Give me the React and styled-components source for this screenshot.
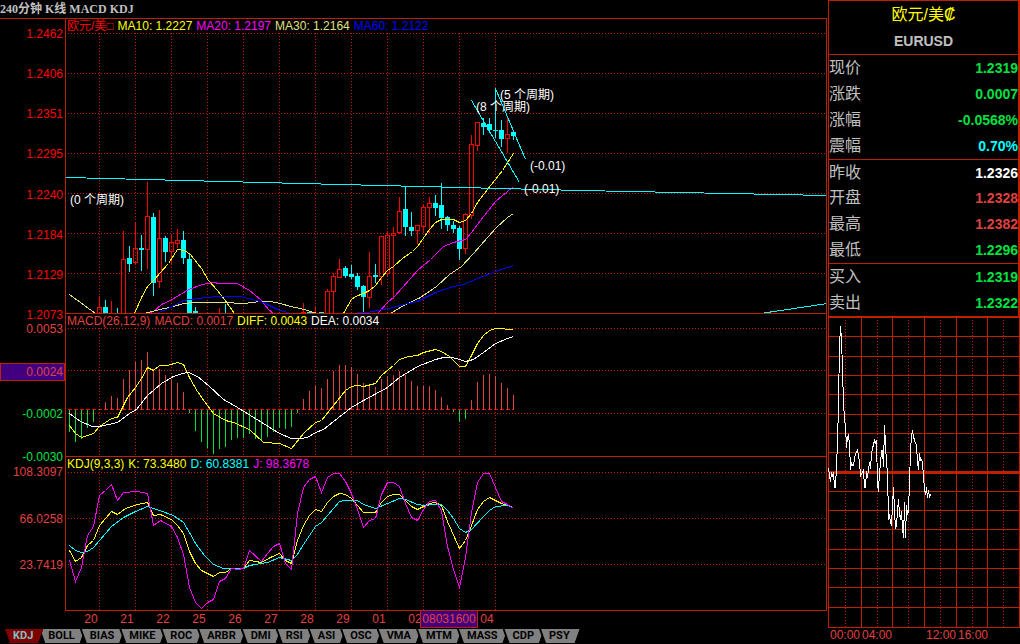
import React, { useState } from 'react';
import styled, { createGlobalStyle } from 'styled-components';

const GlobalStyle = createGlobalStyle`
  * {
    box-sizing: border-box;
  }

  body {
    margin: 0;
    background: #000;
    color: #c0c0c0;
    font-family: "Liberation Sans", "Noto Sans CJK SC", sans-serif;
    font-size: 12px;
    line-height: 14px;
  }
`;

const LINE = '#c02000';
const RED = '#ff0000';
const SOFT_RED = '#e04040';
const GREEN = '#00e040';
const CYAN = '#00ffff';
const YELLOW = '#ffff00';
const MAGENTA = '#ff00ff';
const KHAKI = '#e0e080';
const BLUE = '#0000ff';

const Page = styled.div`
  display: grid;
  grid-template-columns: 1fr 192px;
  min-height: 100vh;
`;

const Main = styled.main`
  display: flex;
  flex-direction: column;
  min-width: 0;
  padding-right: 1px;
`;

const Title = styled.h1`
  height: 18px;
  margin: 0;
  font-family: "Liberation Serif", "Noto Sans CJK SC", serif;
  font-size: 12px;
  line-height: 18px;
  font-weight: bold;
`;

const Charts = styled.div`
  border-top: 1px solid ${LINE};
`;

const Panel = styled.section`
  display: grid;
  grid-template-columns: 65px 1fr;
  grid-template-rows: 100%;
  height: ${(p) => p.$height}px;
`;

const Axis = styled.div`
  display: flex;
  flex-direction: column;
  justify-content: space-between;
  padding-top: 8px;
  margin-bottom: ${(p) => p.$bottom}px;
  text-align: right;
`;

const AxisLabel = styled.span`
  padding-right: 2px;
  color: ${(p) => p.$color};
`;

const AxisCursor = styled(AxisLabel)`
  margin: -2px 0;
  padding-right: 1px;
  border: 1px solid ${LINE};
  background: #400080;
  line-height: 16px;
`;

const Plot = styled.div`
  position: relative;
  display: flex;
  flex-direction: column;
  min-width: 0;
  min-height: 0;
  border: 1px solid ${LINE};
  border-top: none;
`;

const Legend = styled.div`
  display: flex;
  gap: 4px;
  padding-left: 1px;
  white-space: nowrap;
`;

const LegendItem = styled.span`
  color: ${(p) => p.$color};
`;

const Canvas = styled.svg`
  display: block;
  flex: 1;
  width: 100%;
  height: 0;
  min-height: 0;
  overflow: hidden;
  fill: none;
  shape-rendering: crispEdges;
`;

const Note = styled.span`
  position: absolute;
  left: ${(p) => p.$x}px;
  top: ${(p) => p.$y}px;
  color: #fff;
  white-space: nowrap;
`;

const Dates = styled.div`
  position: relative;
  display: flex;
  height: 18px;
  padding-left: 73px;
  color: ${SOFT_RED};
  line-height: 16px;
`;

const DateCell = styled.span`
  width: 36px;
  text-align: center;
`;

const DateCursor = styled.span`
  position: absolute;
  left: 420px;
  top: -1px;
  width: 58px;
  border: 1px solid ${LINE};
  background: #400080;
  text-align: center;
`;

const Tabs = styled.nav`
  display: flex;
  padding-left: 3px;
`;

const Tab = styled.button`
  position: relative;
  z-index: ${(p) => (p.$active ? 1 : 0)};
  height: 14px;
  margin: 0 -5px 0 0;
  padding: 0 10px;
  border: none;
  background: #000;
  color: ${(p) => (p.$active ? '#80c0c0' : '#000')};
  font: bold 11px/14px Roboto, sans-serif;
  clip-path: polygon(0 0, 100% 0, calc(100% - 5px) 100%, 5px 100%);

  &::before {
    content: "";
    position: absolute;
    inset: 0;
    z-index: -1;
    background: ${(p) => (p.$active ? '#800000' : '#808080')};
    clip-path: polygon(2px 0, 100% 0, calc(100% - 5px) 100%, 7px 100%);
  }
`;

const Side = styled.aside`
  display: flex;
  flex-direction: column;
`;

const Quotes = styled.div`
  display: flex;
  flex-direction: column;
  height: 316px;
  border: 1px solid ${LINE};
  border-right-width: 2px;
  border-bottom: none;
`;

const Symbol = styled.header`
  display: flex;
  flex-direction: column;
  align-items: center;
  gap: 4px;
  height: 54px;
  padding-top: 2px;
  border-bottom: 1px solid ${LINE};
`;

const SymbolName = styled.span`
  color: ${YELLOW};
  font-size: 16px;
  line-height: 24px;
`;

const SymbolCode = styled.span`
  font-size: 14px;
  line-height: 20px;
  font-weight: bold;
`;

const QuoteGroup = styled.dl`
  display: flex;
  flex-direction: column;
  flex: ${(p) => p.$rows};
  margin: 0;

  & + & {
    border-top: 1px solid ${LINE};
  }
`;

const Quote = styled.div`
  display: flex;
  flex: 1;
  align-items: center;
  justify-content: space-between;
`;

const QuoteLabel = styled.dt`
  font-size: 16px;
  line-height: 24px;
`;

const QuoteValue = styled.dd`
  margin: 0;
  color: ${(p) => p.$color};
  font-size: 14px;
  line-height: 24px;
  font-weight: bold;
`;

const Intraday = styled.div`
  display: flex;
  flex-direction: column;
  height: 312px;
  border-top: 2px solid ${LINE};
`;

const Times = styled.div`
  display: grid;
  grid-template-columns: repeat(6, 32px);
  padding-left: 2px;
  color: ${SOFT_RED};
`;

// [index, high, top, bottom, low, rising]
const candles = [
  [5, 296, 307, 316, 316, 1], [6, 300, 307, 316, 316, 0], [7, 301, 316, 317, 317, 1],
  [8, 308, 316, 317, 317, 0], [9, 231, 259, 316, 316, 1], [10, 246, 258, 264, 272, 0],
  [11, 222, 248, 262, 264, 1], [12, 235, 248, 250, 271, 0], [13, 182, 216, 249, 269, 1],
  [14, 213, 217, 283, 296, 0], [15, 210, 238, 281, 288, 1], [16, 236, 238, 252, 262, 0],
  [17, 234, 242, 251, 264, 1], [18, 229, 240, 243, 248, 1], [19, 231, 240, 258, 264, 0],
  [20, 254, 259, 314, 314, 0], [21, 307, 311, 314, 314, 0], [25, 308, 316, 317, 317, 1],
  [26, 304, 316, 317, 317, 0], [39, 303, 312, 316, 316, 1], [40, 311, 312, 314, 314, 0],
  [41, 307, 316, 317, 317, 1], [42, 312, 312, 314, 314, 0], [43, 289, 291, 316, 316, 1],
  [44, 273, 276, 291, 316, 1], [45, 259, 269, 277, 277, 1], [46, 266, 268, 276, 278, 0],
  [47, 265, 274, 277, 279, 0], [48, 273, 276, 287, 290, 0], [49, 285, 286, 297, 314, 0],
  [50, 252, 276, 297, 308, 1], [51, 264, 275, 277, 283, 0], [52, 236, 236, 276, 285, 1],
  [53, 231, 235, 273, 276, 1], [54, 227, 233, 235, 299, 1], [55, 197, 211, 232, 234, 1],
  [56, 187, 209, 227, 236, 0], [57, 212, 227, 231, 236, 0], [58, 225, 225, 230, 244, 1],
  [59, 204, 207, 226, 233, 1], [60, 197, 203, 207, 233, 1], [61, 195, 203, 208, 216, 0],
  [62, 183, 205, 218, 229, 0], [63, 216, 217, 225, 231, 0], [64, 221, 225, 229, 233, 0],
  [65, 226, 228, 249, 260, 0], [66, 213, 214, 248, 254, 1], [67, 135, 144, 215, 219, 1],
  [68, 122, 122, 145, 151, 1], [69, 118, 123, 127, 135, 0], [70, 118, 124, 130, 133, 0],
  [71, 88, 130, 131, 138, 0], [72, 120, 130, 139, 147, 0], [73, 118, 134, 138, 153, 1],
  [74, 130, 132, 136, 140, 0],
];

const priceLines = [
  [YELLOW, '134,313 141,297 147,286 154,279 160,272 168,263 177,249 184,250 190,254 201,268 208,280 217,290 224,299 234,313'],
  [YELLOW, '343,313 351,299 355,296 363,293 369,290 375,285 381,277 387,270 393,266 402,258 412,251 417,246 429,229 435,222 441,219 453,219 459,222 465,220 471,213 477,202 487,189 502,170 513,153'],
  [MAGENTA, '147,313 153,311 161,304 170,300 188,289 202,284 213,282 219,283 237,283 249,290 260,299 268,309 273,313'],
  [MAGENTA, '377,313 387,302 393,297 402,287 417,270 430,259 443,246 453,242 465,239 471,232 480,220 495,201 513,186'],
  [KHAKI, '69,294 95,313'],
  [KHAKI, '144,313 155,310 173,306 183,303 195,302 223,302 243,303 260,301 270,301 280,303 290,306 300,308 317,313'],
  [KHAKI, '390,313 403,305 420,297 436,286 449,274 461,266 473,253 495,228 507,217 513,213'],
  [BLUE, '156,313 170,307 183,300 197,298 217,296 240,296 263,302 277,309 290,313'],
  [BLUE, '347,313 367,312 393,307 403,304 417,301 435,292 453,286 463,284 477,278 495,271 513,265'],
  [CYAN, '66,177 340,184 580,190 827,195'],
  [CYAN, '760,313 827,303'],
  [CYAN, '471,100 519,182'],
  [CYAN, '495,88 525,159'],
];

const macdBars = [
  -23, -33, -30, -19, -13, 0, 7, 13, 11, 30, 39, 47, 49, 57, 40, 40, 34, 29, 26, 17,
  -4, -22, -33, -39, -45, -40, -38, -31, -29, -29, -25, -30, -31, -28, -23, -19, -20, -18, -4, 10,
  18, 23, 21, 30, 38, 44, 44, 42, 35, 26, 25, 22, 30, 33, 34, 38, 34, 28, 23, 23,
  23, 19, 12, 4, -3, -13, -10, 9, 27, 34, 35, 33, 26, 21, 14,
];

const macdLines = [
  [YELLOW, '69,425 75,433 81,437 93,433 99,426 111,418 117,417 127,397 135,387 141,378 147,367 153,370 159,365 167,365 177,362 183,364 189,377 197,391 204,401 213,413 225,420 233,422 249,429 263,442 279,443 291,448 303,433 315,422 321,420 333,405 337,400 345,390 351,386 357,385 363,386 375,383 381,375 393,365 399,359 408,356 417,355 423,352 435,349 441,351 449,356 459,366 465,366 471,355 477,343 483,335 489,330 495,328 513,329'],
  ['#fff', '69,413 80,421 92,426 99,426 117,422 129,413 136,409 147,395 161,383 173,376 182,373 188,372 197,376 208,385 223,399 237,407 250,415 279,433 291,438 300,438 307,437 315,432 323,429 333,421 351,407 363,400 387,387 399,377 417,366 435,359 443,357 452,357 459,359 465,361 473,359 483,352 495,343 507,338 513,336'],
];

const kdjLines = [
  [YELLOW, '69,550 75,561 81,557 87,545 93,540 99,525 111,511 117,514 125,508 137,504 147,502 153,515 160,514 171,519 177,525 183,533 189,551 195,563 201,570 213,576 219,572 225,572 231,568 243,568 249,560 261,562 270,557 279,553 285,560 291,563 297,540 303,525 309,515 315,509 321,511 327,502 333,496 339,493 345,494 351,498 357,505 363,512 375,512 381,502 387,496 393,494 399,494 405,500 411,506 417,509 423,506 429,503 435,502 441,505 447,521 459,548 465,540 471,525 477,509 483,501 489,497 501,503 513,507'],
  [CYAN, '69,545 75,550 81,552 87,551 93,547 111,526 123,517 135,511 147,506 159,510 173,515 183,522 189,532 195,543 204,555 213,564 223,568 243,568 249,565 267,562 279,557 291,560 297,554 303,544 315,526 321,522 333,508 339,501 345,500 357,500 363,504 375,508 387,503 399,498 405,499 417,504 423,505 435,504 441,504 447,510 453,518 459,528 465,532 471,529 483,516 489,510 495,506 507,505 513,507'],
  [MAGENTA, '69,560 75,581 81,567 87,535 93,526 99,495 105,490 111,484 117,500 123,492 137,491 147,493 153,525 160,520 171,526 177,537 183,554 189,587 195,602 201,608 207,602 213,599 219,581 225,578 231,568 237,569 243,568 249,550 261,561 267,553 273,546 279,543 285,563 291,569 297,513 303,487 309,479 315,476 321,492 327,477 333,473 339,473 345,481 351,493 357,509 363,527 369,520 375,518 381,494 387,482 393,482 399,486 405,503 411,517 417,520 423,509 429,501 435,500 441,510 447,546 453,569 459,587 465,557 471,512 477,482 483,473 489,473 495,487 501,501 507,504 513,508'],
];

// one price per minute column
const minutes = [
  150, 157, 163, 154, 158, 154, 169, 169, 146, 126, 84, 28, 8, 20, 52, 84, 101, 108, 129, 119,
  116, 126, 151, 144, 147, 147, 141, 135, 134, 132, 136, 144, 157, 155, 154, 151, 169, 169, 153, 159,
  151, 144, 150, 136, 130, 126, 122, 124, 122, 165, 173, 153, 146, 132, 132, 148, 107, 126, 144, 154,
  201, 196, 204, 207, 186, 169, 192, 210, 207, 193, 181, 196, 201, 193, 210, 219, 184, 219, 187, 196,
  192, 164, 133, 116, 113, 118, 122, 125, 126, 144, 151, 135, 142, 141, 144, 159, 170, 176, 169, 179,
  172, 179, 176,
];

// the cell under the date cursor stays empty
const dates = ['20', '21', '22', '25', '26', '27', '28', '29', '01', '02', '', '04'];

const tabs = ['KDJ', 'BOLL', 'BIAS', 'MIKE', 'ROC', 'ARBR', 'DMI', 'RSI', 'ASI', 'OSC', 'VMA', 'MTM', 'MASS', 'CDP', 'PSY'];

const quotes = [
  [['现价', '1.2319', GREEN], ['涨跌', '0.0007', GREEN], ['涨幅', '-0.0568%', GREEN], ['震幅', '0.70%', CYAN]],
  [['昨收', '1.2326', '#fff'], ['开盘', '1.2328', SOFT_RED], ['最高', '1.2382', SOFT_RED], ['最低', '1.2296', GREEN]],
  [['买入', '1.2319', GREEN], ['卖出', '1.2322', GREEN]],
];

const xOf = (i) => 69.5 + i * 6;

const Plotted = ({ top, rows, lines, children }) => (
  <Canvas aria-hidden="true">
    <g transform={`translate(-66 ${-top})`}>
      <g stroke={LINE} strokeDasharray="1 2">
        {dates.map((d, i) => (
          <line key={i} x1={99.5 + i * 36} x2={99.5 + i * 36} y1={top} y2={top + 400} />
        ))}
        {rows.map((y) => (
          <line key={y} x1="68" x2="4000" y1={y + 0.5} y2={y + 0.5} />
        ))}
      </g>
      {children}
      <g transform="translate(.5 .5)">
        {lines.map(([color, points]) => (
          <polyline key={points} stroke={color} points={points} />
        ))}
      </g>
    </g>
  </Canvas>
);

const Candle = ({ data: [i, high, top, bottom, low, rising] }) => {
  const x = xOf(i);
  if (!rising) {
    return (
      <g stroke={CYAN}>
        <line x1={x} x2={x} y1={high} y2={low} />
        <rect x={x - 2.5} y={top} width="5" height={Math.max(bottom - top, 1)} fill={CYAN} stroke="none" />
      </g>
    );
  }
  return (
    <g stroke={RED}>
      <line x1={x} x2={x} y1={high} y2={top} />
      <line x1={x} x2={x} y1={bottom} y2={low} />
      <rect x={x - 2} y={top + 0.5} width="4" height={bottom - top} />
    </g>
  );
};

const PricePanel = () => (
  <Panel $height={295}>
    <Axis $bottom={-8}>
      {['1.2462', '1.2406', '1.2351', '1.2295', '1.2240', '1.2184', '1.2129', '1.2073'].map((v) => (
        <AxisLabel key={v} $color={RED}>{v}</AxisLabel>
      ))}
    </Axis>
    <Plot>
      <Legend>
        <LegendItem $color={RED}>欧元/美□</LegendItem>
        <LegendItem $color={YELLOW}>MA10: 1.2227</LegendItem>
        <LegendItem $color={MAGENTA}>MA20: 1.2197</LegendItem>
        <LegendItem $color={KHAKI}>MA30: 1.2164</LegendItem>
        <LegendItem $color={BLUE}>MA60: 1.2122</LegendItem>
      </Legend>
      <Plotted top={33} rows={[33, 73, 113, 153, 193, 233, 273]} lines={priceLines}>
        {candles.map((c) => <Candle key={c[0]} data={c} />)}
      </Plotted>
      <Note $x={4} $y={174}>(0 个周期)</Note>
      <Note $x={410} $y={81}>(8 个周期)</Note>
      <Note $x={434} $y={69}>(5 个周期)</Note>
      <Note $x={464} $y={140}>(-0.01)</Note>
      <Note $x={458} $y={163}>(-0.01)</Note>
    </Plot>
  </Panel>
);

const MacdPanel = () => (
  <Panel $height={143}>
    <Axis $bottom={-7}>
      <AxisLabel $color={SOFT_RED}>0.0053</AxisLabel>
      <AxisCursor $color={SOFT_RED}>0.0024</AxisCursor>
      <AxisLabel $color={GREEN}>-0.0002</AxisLabel>
      <AxisLabel $color={GREEN}>-0.0030</AxisLabel>
    </Axis>
    <Plot>
      <Legend>
        <LegendItem $color={SOFT_RED}>MACD(26,12,9)</LegendItem>
        <LegendItem $color={SOFT_RED}>MACD: 0.0017</LegendItem>
        <LegendItem $color={YELLOW}>DIFF: 0.0043</LegendItem>
        <LegendItem $color="#fff">DEA: 0.0034</LegendItem>
      </Legend>
      <Plotted top={328} rows={[328, 370, 413]} lines={macdLines}>
        <line x1="68" x2="514" y1="409.5" y2="409.5" stroke={RED} strokeDasharray="4 2" />
        {macdBars.map((v, i) => (
          <line key={i} x1={xOf(i)} x2={xOf(i)} y1="410" y2={409 - v} stroke={v > 0 ? SOFT_RED : GREEN} />
        ))}
      </Plotted>
    </Plot>
  </Panel>
);

const KdjPanel = () => (
  <Panel $height={154}>
    <Axis $bottom={39}>
      {['108.3097', '66.0258', '23.7419'].map((v) => (
        <AxisLabel key={v} $color={SOFT_RED}>{v}</AxisLabel>
      ))}
    </Axis>
    <Plot>
      <Legend>
        <LegendItem $color={YELLOW}>KDJ(9,3,3)</LegendItem>
        <LegendItem $color={YELLOW}>K: 73.3480</LegendItem>
        <LegendItem $color={CYAN}>D: 60.8381</LegendItem>
        <LegendItem $color={MAGENTA}>J: 98.3678</LegendItem>
      </Legend>
      <Plotted top={471} rows={[472, 518, 564]} lines={kdjLines} />
    </Plot>
  </Panel>
);

const IntradayChart = () => (
  <Intraday>
    <Canvas aria-hidden="true">
      <g stroke={LINE}>
        {[18, 38, 57, 76, 96, 115, 134, 173, 192, 211, 231, 250, 269, 289, 309].map((y) => (
          <line key={y} x1="0" x2="192" y1={y + 0.5} y2={y + 0.5} />
        ))}
        <line x1="0" x2="192" y1="154.5" y2="154.5" strokeWidth="3" />
        {[0, 33, 64, 96, 128, 159, 191].map((x) => (
          <line key={x} x1={x + 0.5} x2={x + 0.5} y1="0" y2="310" />
        ))}
        {[17, 49, 80, 112, 144, 175].map((x) => (
          <line key={x} x1={x + 0.5} x2={x + 0.5} y1="2" y2="310" strokeDasharray="1 2" />
        ))}
      </g>
      <polyline stroke="#fff" points={minutes.map((y, i) => `${i + 0.5},${y + 0.5}`).join(' ')} />
    </Canvas>
  </Intraday>
);

const App = () => {
  const [active, setActive] = useState('KDJ');

  return (
    <>
      <GlobalStyle />
      <Page>
        <Main>
          <Title>240分钟 K线 MACD KDJ</Title>
          <Charts>
            <PricePanel />
            <MacdPanel />
            <KdjPanel />
          </Charts>
          <Dates>
            {dates.map((d, i) => <DateCell key={i}>{d}</DateCell>)}
            <DateCursor>08031600</DateCursor>
          </Dates>
          <Tabs>
            {tabs.map((name) => (
              <Tab key={name} type="button" $active={name === active} onClick={() => setActive(name)}>
                {name}
              </Tab>
            ))}
          </Tabs>
        </Main>
        <Side>
          <Quotes>
            <Symbol>
              <SymbolName>欧元/美₡</SymbolName>
              <SymbolCode>EURUSD</SymbolCode>
            </Symbol>
            {quotes.map((group) => (
              <QuoteGroup key={group[0][0]} $rows={group.length}>
                {group.map(([label, value, color]) => (
                  <Quote key={label}>
                    <QuoteLabel>{label}</QuoteLabel>
                    <QuoteValue $color={color}>{value}</QuoteValue>
                  </Quote>
                ))}
              </QuoteGroup>
            ))}
          </Quotes>
          <IntradayChart />
          <Times>
            <span>00:00</span>
            <span>04:00</span>
            <span />
            <span>12:00</span>
            <span>16:00</span>
          </Times>
        </Side>
      </Page>
    </>
  );
};

export default App;
